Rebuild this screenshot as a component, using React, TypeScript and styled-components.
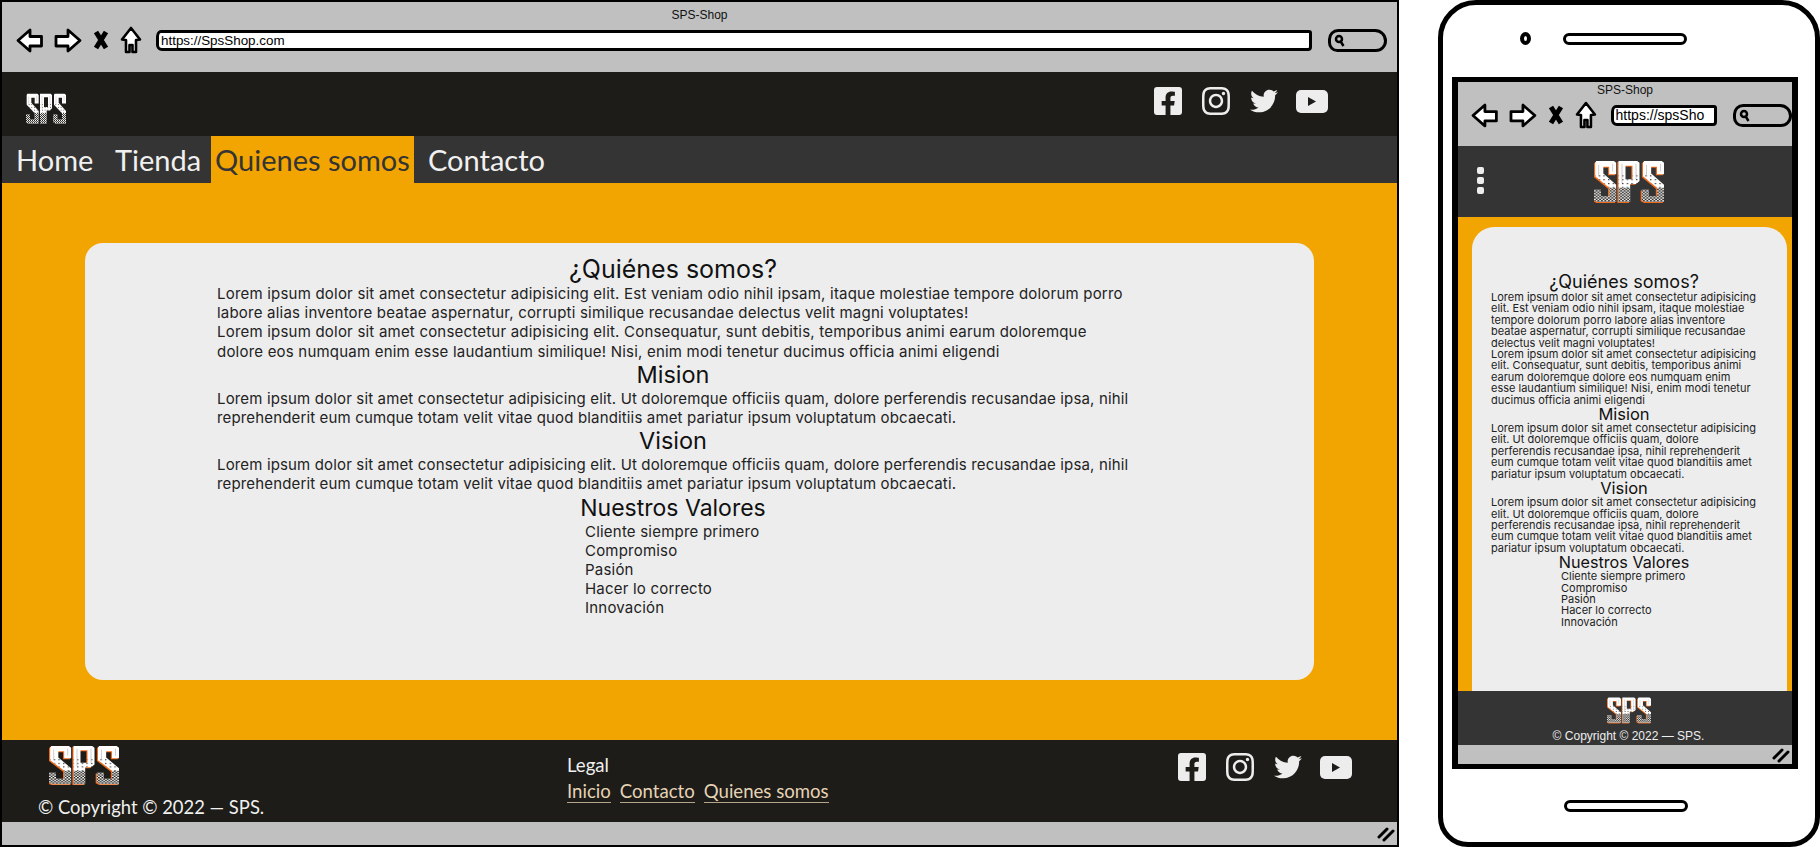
import React, { useId } from "react";
import styled, { createGlobalStyle } from "styled-components";
import { FaFacebookSquare, FaInstagram, FaTwitter } from "react-icons/fa";

const Global = createGlobalStyle`
  html, body { margin: 0; padding: 0; background: #fff; overflow: hidden; }
  * { box-sizing: border-box; }
`;

const Page = styled.div`
  width: 1820px; height: 847px; display: flex; gap: 39px; align-items: stretch;
  font-family: "Liberation Sans", Arial, sans-serif;
`;
const DesktopWindow = styled.div`
  width: 1399px; height: 847px; border: 2px solid #000; display: flex; flex-direction: column; background: #c0c0c0;
`;
const Chrome = styled.div<{ $h: number }>`
  height: ${p => p.$h}px; flex: none; background: #c0c0c0; display: flex; flex-direction: column; align-items: stretch;
`;
const Title = styled.div<{ $top: number }>`
  text-align: center; font-size: 12px; line-height: 14px; color: #111; padding-top: ${p => p.$top}px;
`;
const ToolRow = styled.div<{ $pad: string }>`
  display: flex; align-items: center; gap: 11px; padding: ${p => p.$pad}; margin-top: 4px;
`;
const UrlBox = styled.div<{ $w?: number; $size: number }>`
  ${p => (p.$w ? `width:${p.$w}px;` : "flex: 1;")}
  height: 21px; margin: 0 5px 0 3px; background: #fff; border: 3px solid #000; border-radius: 5px 3px 4px 6px / 7px 3px 4px 6px;
  font-size: ${p => p.$size}px; line-height: 15px; padding-left: 2px; color: #000; overflow: hidden; white-space: nowrap;
`;
const SearchBox = styled.div`
  width: 59px; height: 23px; border: 3px solid #000; border-radius: 12px 14px 13px 11px; background: #c0c0c0;
  display: flex; align-items: center; padding-left: 3px; flex: none;
`;
const DarkHeader = styled.div`
  height: 64px; flex: none; background: #1d1c18; display: flex; justify-content: space-between;
  padding: 21px 69px 0 24px;
`;
const Socials = styled.div<{ $top: number }>`
  display: flex; align-items: center; gap: 18px; color: #ededed; margin-top: ${p => p.$top}px; height: 32px;
  svg { display: block; }
  svg:first-child { margin-right: -2px; }
`;
const Nav = styled.nav`
  height: 47px; flex: none; background: #343434; display: flex; align-items: stretch; padding-left: 14px;
  font-family: Lato, sans-serif; font-size: 29px; color: #f0f0f0;
`;
const NavItem = styled.a<{ $active?: boolean; $w: number }>`
  width: ${p => p.$w}px; display: flex; align-items: center;
  ${p => p.$active ? "background:#f2a500;color:#343434;justify-content:center;" : ""}
`;
const Contact = styled(NavItem)`
  padding-left: 14px;
`;
const Main = styled.main`
  height: 557px; flex: none; background: #f2a500; padding: 60px 83px 60px 83px; display: flex;
`;
const Card = styled.div`
  flex: 1; background: #ededed; border-radius: 18px; padding: 12px 0 0 132px;
  font-family: Inter, sans-serif; color: #222;
`;
const Column = styled.div`
  width: 918px; font-size: 15px; line-height: 19.2px; letter-spacing: 0.21px;
`;
const Heading = styled.h2<{ $size: number }>`
  margin: 0; padding-right: 6px; text-align: center; font-weight: 400; font-size: ${p => p.$size}px; line-height: 28px; color: #111; letter-spacing: 0;
  &:first-child { padding-bottom: 1px; }
`;
const Para = styled.p`
  margin: 0;
`;
const TightPara = styled(Para)`
  letter-spacing: 0.15px;
`;
const Values = styled.ul`
  list-style: none; margin: 0; padding: 0 0 0 368px;
`;
const DesktopFooter = styled.footer`
  height: 82px; flex: none; background: #1d1c18; display: grid; grid-template-columns: 565px 1fr auto; color: #f0f0f0;
  padding-right: 45px; font-family: Lato, sans-serif;
`;
const FootBrand = styled.div`
  display: flex; flex-direction: column; padding: 5px 0 0 36px; gap: 10px; font-size: 18.4px; line-height: 22px;
`;
const FootBrandLogo = styled.div` padding-left: 11px; `;
const FootLegal = styled.div`
  padding-top: 14px; font-size: 18.6px; line-height: 22px; display: flex; flex-direction: column; gap: 4px;
`;
const FootLinks = styled.div` display: flex; gap: 9px; `;
const FootLink = styled.a`
  color: #e6d3b5; border-bottom: 1px solid #b3a48c; line-height: 22px;
`;
const StatusBar = styled.div`
  flex: 1; background: #c0c0c0; display: flex; justify-content: flex-end; align-items: center; padding-right: 2px; min-height: 0;
`;
const Phone = styled.div`
  width: 382px; height: 847px; border: 5px solid #000; border-radius: 38px 38px 30px 30px; background: #fff;
  display: flex; flex-direction: column; align-items: center;
`;
const PhoneTop = styled.div`
  height: 72px; flex: none; display: flex; align-items: center; gap: 32px; margin-right: 52px; padding-bottom: 5px;
`;
const Camera = styled.div`
  width: 11px; height: 13px; border: 4px solid #000; border-radius: 50%;
`;
const Slot = styled.div`
  width: 124px; height: 12px; border: 3px solid #000; border-radius: 7px;
`;
const PhoneBottom = styled.div`
  flex: 1; display: flex; align-items: center; justify-content: center; margin-right: 52px; padding-left: 46px;
`;
const PhoneScreen = styled.div`
  width: 346px; height: 692px; flex: none; margin-left: -8px; border: solid #000; border-width: 5px 6px 5px 6px; display: flex; flex-direction: column; background: #c0c0c0;
`;
const PhoneDark = styled.div`
  height: 71px; flex: none; background: #343434; display: flex; align-items: center; justify-content: center; position: relative; padding-left: 7px;
`;
const Dots = styled.div`
  position: absolute; left: 19px; top: 21px; display: flex; flex-direction: column; gap: 3px;
  span { width: 7px; height: 7px; border-radius: 2px; background: #ededed; display: block; }
`;
const PhoneMain = styled.main`
  height: 474px; flex: none; background: #f2a500; padding: 10px 5px 0 14px; display: flex;
`;
const PhoneCard = styled.div`
  flex: 1; background: #ededed; border-radius: 22px 22px 0 0; padding: 45px 0 0 19px;
  font-family: Inter, sans-serif; color: #222;
`;
const PhoneColumn = styled.div`
  width: 266px; font-size: 11px; line-height: 11.4px;
`;
const PhoneHeading = styled.h2<{ $size: number }>`
  margin: 0; text-align: center; font-weight: 400; font-size: ${p => p.$size}px; line-height: 17px; color: #111;
  &:first-child { line-height: 20px; }
`;
const PhoneValues = styled.ul`
  list-style: none; margin: 0; padding: 0 0 0 70px;
`;
const PhoneFooter = styled.footer`
  height: 54px; flex: none; background: #343434; color: #eee; display: flex; flex-direction: column; align-items: center;
  padding: 6px 0 0 7px; gap: 5px; font-size: 12px;
`;
const LogoSvg = styled.svg`
  display: block;
`;

const S_PATH = "M2 1H17L19 3V15H13V7H8V14L19 26V44H3L0 42V31H6V38H13V29L1 17V3Z";
const P_PATH = "M21 1H37L39 3V22L36 25H31V44H21ZM27 6V20H33V6Z";

const Logo: React.FC<{ w: number; h: number; edge?: boolean }> = ({ w, h, edge }) => {
  const id = useId().replace(/[^a-zA-Z0-9]/g, "");
  return (
    <LogoSvg width={w} height={h} viewBox="0 0 60 46" preserveAspectRatio="none">
      <defs>
        <pattern id={`ck${id}`} width="3" height="3" patternUnits="userSpaceOnUse">
          <rect width="1.5" height="1.5" fill="#1d1c18" />
          <rect x="1.5" y="1.5" width="1.5" height="1.5" fill="#1d1c18" />
        </pattern>
        <pattern id={`dt${id}`} width="4" height="4" patternUnits="userSpaceOnUse">
          <rect width="1.2" height="1.2" fill="#333" />
        </pattern>
        <clipPath id={`cl${id}`}>
          <path d={S_PATH} />
          <path d={P_PATH} clipRule="evenodd" />
          <path d={S_PATH} transform="translate(41)" />
        </clipPath>
      </defs>
      {edge && (
        <g fill="#f06a1a" transform="translate(-1 1)">
          <path d={S_PATH} />
          <path d={P_PATH} fillRule="evenodd" />
          <path d={S_PATH} transform="translate(41)" />
        </g>
      )}
      <g fill="#fff">
        <path d={S_PATH} />
        <path d={P_PATH} fillRule="evenodd" />
        <path d={S_PATH} transform="translate(41)" />
      </g>
      <g clipPath={`url(#cl${id})`}>
        <rect y="14" width="60" height="15" fill={`url(#dt${id})`} />
        <rect y="29" width="60" height="17" fill={`url(#ck${id})`} />
      </g>
      <path d="M4 5V16M16 4V12M24 4V24M36 4V20M45 5V16M57 4V12" stroke="#c4c4c4" strokeWidth="0.8" />
    </LogoSvg>
  );
};

const Back = () => (
  <svg width="27" height="25" viewBox="0 0 27 25"><path d="M2 12.5 14 2v6.5h11.5V18H14v5z" fill="#fff" stroke="#000" strokeWidth="2.8" strokeLinejoin="round" /></svg>
);
const Fwd = () => (
  <svg width="28" height="25" viewBox="0 0 28 25"><path d="M26 12.5 14 2v6.5H2V18h12v5z" fill="#fff" stroke="#000" strokeWidth="2.8" strokeLinejoin="round" /></svg>
);
const Cross = () => (
  <svg width="16" height="20" viewBox="0 0 16 20"><path d="M3 2l10 16M13 2 3 18" stroke="#000" strokeWidth="5" /></svg>
);
const Home = () => (
  <svg width="22" height="28" viewBox="0 0 22 28"><path d="M11 2 20 13.5l-4 .5v12h-3.5v-7h-3v7H6V14l-4-.5z" fill="#fff" stroke="#000" strokeWidth="2.6" strokeLinejoin="round" /></svg>
);
const Lens = () => (
  <svg width="11" height="13" viewBox="0 0 11 13"><circle cx="5" cy="5" r="3" fill="none" stroke="#000" strokeWidth="2.5" /><path d="M7 8l2.5 4" stroke="#000" strokeWidth="2.5" /></svg>
);
const Grip = () => (
  <svg width="18" height="16" viewBox="0 0 18 16"><path d="M2 11 10 3M7 14l9-9" stroke="#000" strokeWidth="3" strokeLinecap="round" /></svg>
);
const YouTube = () => (
  <svg width="32" height="23" viewBox="0 0 32 23"><rect width="32" height="23" rx="5" fill="currentColor" /><path d="M12 7l8 4.5-8 4.5z" fill="#1d1c18" /></svg>
);

const SocialIcons: React.FC<{ top: number }> = ({ top }) => (
  <Socials $top={top}>
    <FaFacebookSquare size={32} />
    <FaInstagram size={32} />
    <FaTwitter size={28} />
    <YouTube />
  </Socials>
);

const L1 = "Lorem ipsum dolor sit amet consectetur adipisicing elit. Est veniam odio nihil ipsam, itaque molestiae tempore dolorum porro labore alias inventore beatae aspernatur, corrupti similique recusandae delectus velit magni voluptates!";
const L2 = "Lorem ipsum dolor sit amet consectetur adipisicing elit. Consequatur, sunt debitis, temporibus animi earum doloremque dolore eos numquam enim esse laudantium similique! Nisi, enim modi tenetur ducimus officia animi eligendi";
const L3 = "Lorem ipsum dolor sit amet consectetur adipisicing elit. Ut doloremque officiis quam, dolore perferendis recusandae ipsa, nihil reprehenderit eum cumque totam velit vitae quod blanditiis amet pariatur ipsum voluptatum obcaecati.";
const vals = ["Cliente siempre primero", "Compromiso", "Pasión", "Hacer lo correcto", "Innovación"];

export default function App() {
  return (
    <Page>
      <Global />
      <DesktopWindow>
        <Chrome $h={70}>
          <Title $top={6}>SPS-Shop</Title>
          <ToolRow $pad="0 10px 0 14px">
            <Back /><Fwd /><Cross /><Home />
            <UrlBox $size={13.4}>https://SpsShop.com</UrlBox>
            <SearchBox><Lens /></SearchBox>
          </ToolRow>
        </Chrome>
        <DarkHeader>
          <Logo w={40} h={32} />
          <SocialIcons top={-8} />
        </DarkHeader>
        <Nav>
          <NavItem $w={99}>Home</NavItem>
          <NavItem $w={96}>Tienda</NavItem>
          <NavItem $w={203} $active>Quienes somos</NavItem>
          <Contact $w={142}>Contacto</Contact>
        </Nav>
        <Main>
          <Card>
            <Column>
              <Heading $size={25}>¿Quiénes somos?</Heading>
              <Para>{L1}</Para>
              <Para>{L2}</Para>
              <Heading $size={23.5}>Mision</Heading>
              <TightPara>{L3}</TightPara>
              <Heading $size={23.5}>Vision</Heading>
              <TightPara>{L3}</TightPara>
              <Heading $size={23}>Nuestros Valores</Heading>
              <Values>{vals.map(v => <li key={v}>{v}</li>)}</Values>
            </Column>
          </Card>
        </Main>
        <DesktopFooter>
          <FootBrand>
            <FootBrandLogo><Logo w={70} h={41} edge /></FootBrandLogo>
            <span>© Copyright © 2022 — SPS.</span>
          </FootBrand>
          <FootLegal>
            <span>Legal</span>
            <FootLinks>
              <FootLink>Inicio</FootLink>
              <FootLink>Contacto</FootLink>
              <FootLink>Quienes somos</FootLink>
            </FootLinks>
          </FootLegal>
          <SocialIcons top={11} />
        </DesktopFooter>
        <StatusBar><Grip /></StatusBar>
      </DesktopWindow>
      <Phone>
        <PhoneTop><Camera /><Slot /></PhoneTop>
        <PhoneScreen>
          <Chrome $h={64}>
            <Title $top={1}>SPS-Shop</Title>
            <ToolRow $pad="0 0 0 13px">
              <Back /><Fwd /><Cross /><Home />
              <UrlBox $w={107} $size={14}>https://spsSho</UrlBox>
              <SearchBox><Lens /></SearchBox>
            </ToolRow>
          </Chrome>
          <PhoneDark>
            <Dots><span /><span /><span /></Dots>
            <Logo w={70} h={44} edge />
          </PhoneDark>
          <PhoneMain>
            <PhoneCard>
              <PhoneColumn>
                <PhoneHeading $size={18}>¿Quiénes somos?</PhoneHeading>
                <Para>{L1}</Para>
                <Para>{L2}</Para>
                <PhoneHeading $size={16.5}>Mision</PhoneHeading>
                <Para>{L3}</Para>
                <PhoneHeading $size={16.5}>Vision</PhoneHeading>
                <Para>{L3}</Para>
                <PhoneHeading $size={16.2}>Nuestros Valores</PhoneHeading>
                <PhoneValues>{vals.map(v => <li key={v}>{v}</li>)}</PhoneValues>
              </PhoneColumn>
            </PhoneCard>
          </PhoneMain>
          <PhoneFooter>
            <Logo w={44} h={27} edge />
            <span>© Copyright © 2022 — SPS.</span>
          </PhoneFooter>
          <StatusBar><Grip /></StatusBar>
        </PhoneScreen>
        <PhoneBottom><Slot /></PhoneBottom>
      </Phone>
    </Page>
  );
}
